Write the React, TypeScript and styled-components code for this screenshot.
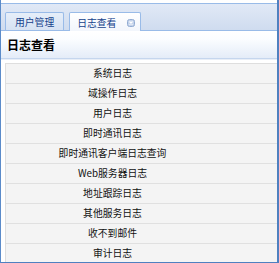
import React from "react";
import styled, { createGlobalStyle } from "styled-components";

const GlobalStyle = createGlobalStyle`
  html, body {
    margin: 0;
    padding: 0;
    background: #fff;
  }
  body {
    font-family: "Noto Sans CJK SC", "Liberation Sans", sans-serif;
  }
`;

const logItems = [
  "系统日志",
  "域操作日志",
  "用户日志",
  "即时通讯日志",
  "即时通讯客户端日志查询",
  "Web服务器日志",
  "地址跟踪日志",
  "其他服务日志",
  "收不到邮件",
  "审计日志",
];

export default function App() {
  return (
    <>
      <GlobalStyle />
      <Frame>
        <TabStrip>
          <Tab>用户管理</Tab>
          <Tab active>
            日志查看
            <CloseIcon viewBox="0 0 8 8">
              <rect x="0.5" y="0.5" width="7" height="7" rx="2" fill="#c3d2ea" stroke="#92acd3" />
              <path d="M2.5 2.5 L5.5 5.5 M5.5 2.5 L2.5 5.5" stroke="#fff" strokeWidth="1.2" />
            </CloseIcon>
          </Tab>
        </TabStrip>
        <Header>日志查看</Header>
        <Body>
          <List>
            {logItems.map((item) => (
              <Row key={item}>{item}</Row>
            ))}
          </List>
        </Body>
      </Frame>
    </>
  );
}

const Frame = styled.div`
  width: 279px;
  height: 263px;
  box-sizing: border-box;
  border-left: 1px solid #5b8bc9;
  border-right: 2px solid #4f80c0;
  border-bottom: 1px solid #4f80c0;
  display: flex;
  flex-direction: column;
  overflow: hidden;
`;

const TabStrip = styled.div`
  margin-top: 3px;
  height: 28px;
  flex: none;
  box-sizing: border-box;
  border-top: 1px solid #99bbe8;
  border-bottom: 1px solid #99bbe8;
  background: linear-gradient(#e1e9f6, #cfdcef);
  display: flex;
  align-items: flex-end;
  gap: 5px;
  padding-left: 4px;
`;

const Tab = styled.div<{ active?: boolean }>`
  box-sizing: border-box;
  border: 1px solid #99bbe8;
  border-bottom: none;
  border-radius: 2px 2px 0 0;
  padding: ${(p) => (p.active ? "1px 5px 0 7px" : "1px 9px 0")};
  display: flex;
  align-items: center;
  gap: 11px;
  font-size: 9.8px;
  color: #15428b;
  background: ${(p) =>
    p.active
      ? "linear-gradient(#ffffff, #f2f6fc)"
      : "linear-gradient(#e6eef9, #d6e2f3)"};
  margin-bottom: ${(p) => (p.active ? "-1px" : "0")};
  height: ${(p) => (p.active ? "19px" : "18px")};
`;

const CloseIcon = styled.svg`
  width: 8px;
  height: 8px;
  flex: none;
`;

const Header = styled.div`
  height: 28px;
  flex: none;
  box-sizing: border-box;
  padding: 5px 0 0 6px;
  background: linear-gradient(#ffffff, #fbfdff 30%, #e4ecf8);
  border-bottom: 1px solid #c5d6ee;
  font-size: 12px;
  font-weight: bold;
  color: #000;
  line-height: 18px;
`;

const Body = styled.div`
  flex: 1;
  min-height: 0;
  padding: 3px 0 0 4px;
  background: #fff;
  border-top: 1px solid #e8eef7;
`;

const List = styled.div`
  border-left: 1px solid #dedede;
  border-top: 1px solid #dedede;
  background: #f4f4f4;
  height: 100%;
`;

const Row = styled.div`
  height: 20px;
  box-sizing: border-box;
  padding-right: 58px;
  border-bottom: 1px solid #e0e0e0;
  text-align: center;
  font-size: 9.8px;
  line-height: 19px;
  color: #111;
`;
